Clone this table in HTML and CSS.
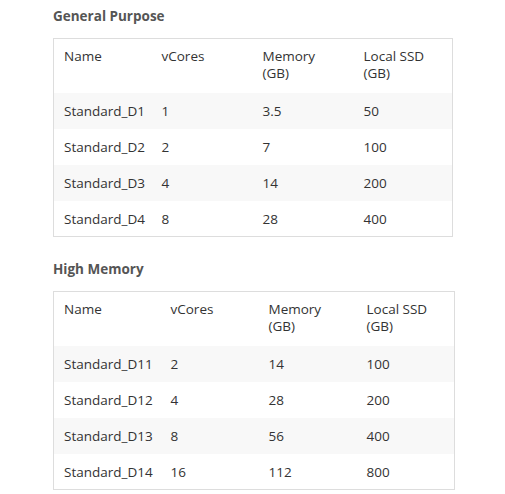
FILE: index.html
```html
<!DOCTYPE html>
<html>
<head>
<meta charset="utf-8">
<link rel="stylesheet" href="styles.css">
</head>
<body>
<div class="page">
  <section class="group">
    <h2 class="title">General Purpose</h2>
    <table class="specs specs-gp">
      <colgroup>
        <col class="c-name"><col class="c-cores"><col class="c-mem"><col class="c-ssd">
      </colgroup>
      <thead>
        <tr><th>Name</th><th>vCores</th><th>Memory<br>(GB)</th><th>Local SSD<br>(GB)</th></tr>
      </thead>
      <tbody>
        <tr><td>Standard_D1</td><td>1</td><td>3.5</td><td>50</td></tr>
        <tr><td>Standard_D2</td><td>2</td><td>7</td><td>100</td></tr>
        <tr><td>Standard_D3</td><td>4</td><td>14</td><td>200</td></tr>
        <tr><td>Standard_D4</td><td>8</td><td>28</td><td>400</td></tr>
      </tbody>
    </table>
  </section>
  <section class="group">
    <h2 class="title">High Memory</h2>
    <table class="specs specs-hm">
      <colgroup>
        <col class="c-name"><col class="c-cores"><col class="c-mem"><col class="c-ssd">
      </colgroup>
      <thead>
        <tr><th>Name</th><th>vCores</th><th>Memory<br>(GB)</th><th>Local SSD<br>(GB)</th></tr>
      </thead>
      <tbody>
        <tr><td>Standard_D11</td><td>2</td><td>14</td><td>100</td></tr>
        <tr><td>Standard_D12</td><td>4</td><td>28</td><td>200</td></tr>
        <tr><td>Standard_D13</td><td>8</td><td>56</td><td>400</td></tr>
        <tr><td>Standard_D14</td><td>16</td><td>112</td><td>800</td></tr>
      </tbody>
    </table>
  </section>
</div>
</body>
</html>
```
FILE: styles.css
```css
* { box-sizing: border-box; }
html, body { margin: 0; padding: 0; background: #fff; }
body {
  font-family: "Open Sans", "Noto Sans", "Liberation Sans", sans-serif;
  font-size: 13.5px;
  color: #333;
}
.page {
  padding: 6px 0 0 53px;
  display: flex;
  flex-direction: column;
  gap: 22px;
}
.title {
  margin: 0 0 12px 0;
  font-size: 13.5px;
  line-height: 20px;
  font-weight: 700;
  color: #555;
}
.specs {
  border-collapse: collapse;
  table-layout: fixed;
  border: 1px solid #ddd;
}
.specs-gp { width: 399px; }
.specs-hm { width: 401px; }
.specs-gp .c-name { width: 98px; }
.specs-gp .c-cores { width: 101px; }
.specs-gp .c-mem { width: 101px; }
.specs-gp .c-ssd { width: 99px; }
.specs-hm .c-name { width: 107px; }
.specs-hm .c-cores { width: 98px; }
.specs-hm .c-mem { width: 98px; }
.specs-hm .c-ssd { width: 98px; }
.specs th {
  text-align: left;
  font-weight: 400;
  vertical-align: top;
  height: 54px;
  padding: 9px 10px 9px 10px;
  line-height: 17px;
  color: #333;
}
.specs td {
  height: 36px;
  padding: 1px 10px 0 10px;
  line-height: 18px;
  vertical-align: middle;
  white-space: nowrap;
}
.specs tbody tr:nth-child(odd) { background: #f8f8f8; }
```
